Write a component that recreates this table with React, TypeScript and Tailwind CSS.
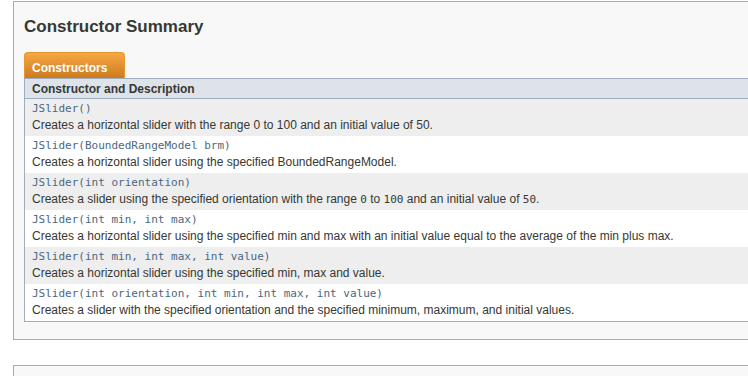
const mono = "font-['DejaVu_Sans_Mono',monospace]";

const rows: { sig: string; desc: React.ReactNode }[] = [
  {
    sig: "JSlider()",
    desc: "Creates a horizontal slider with the range 0 to 100 and an initial value of 50.",
  },
  {
    sig: "JSlider(BoundedRangeModel brm)",
    desc: "Creates a horizontal slider using the specified BoundedRangeModel.",
  },
  {
    sig: "JSlider(int orientation)",
    desc: (
      <>
        Creates a slider using the specified orientation with the range{" "}
        <code className={`${mono} text-[11px]`}>0</code> to{" "}
        <code className={`${mono} text-[11px]`}>100</code> and an initial value of{" "}
        <code className={`${mono} text-[11px]`}>50</code>.
      </>
    ),
  },
  {
    sig: "JSlider(int min, int max)",
    desc: "Creates a horizontal slider using the specified min and max with an initial value equal to the average of the min plus max.",
  },
  {
    sig: "JSlider(int min, int max, int value)",
    desc: "Creates a horizontal slider using the specified min, max and value.",
  },
  {
    sig: "JSlider(int orientation, int min, int max, int value)",
    desc: "Creates a slider with the specified orientation and the specified minimum, maximum, and initial values.",
  },
];

export default function App() {
  return (
    <div className="w-[748px] h-[376px] overflow-hidden bg-white pt-px pl-[13px] font-['Liberation_Sans',Arial,sans-serif] text-[#353833]">
      <div className="w-[760px] border border-[#9eadc0] bg-[#f8f8f8] pl-[10px] pt-[15px] pb-[17px]">
        <h3 className="text-[17px] leading-[20px] font-bold">Constructor Summary</h3>

        {/* caption tab */}
        <div className="mt-[15px] flex">
          <div className="w-[101px] h-[26px] rounded-t-[4px] border-x border-t border-[#e4962f] bg-gradient-to-b from-[#f6a843] to-[#cd7b1d] pl-[7px] pt-[7px] text-[12px] leading-[16px] font-bold text-white">
            Constructors
          </div>
        </div>

        <div className="border border-[#9eadc0]">
          <div className="h-[20px] bg-[#dee3e9] border-b border-[#9eadc0] pl-[7px] text-[12px] leading-[20px] font-bold">
            Constructor and Description
          </div>
          {rows.map((r, i) => (
            <div
              key={i}
              className={`h-[37px] pl-[7px] pt-px ${i % 2 === 0 ? "bg-[#eeeeef]" : "bg-white"}`}
            >
              <div className={`${mono} text-[11px] leading-[17px] text-[#4a6782] whitespace-pre`}>{r.sig}</div>
              <div className="text-[12px] leading-[16px] whitespace-nowrap">{r.desc}</div>
            </div>
          ))}
        </div>
      </div>

      <div className="mt-[25px] h-[40px] w-[760px] border border-[#9eadc0] bg-[#f8f8f8]" />
    </div>
  );
}
